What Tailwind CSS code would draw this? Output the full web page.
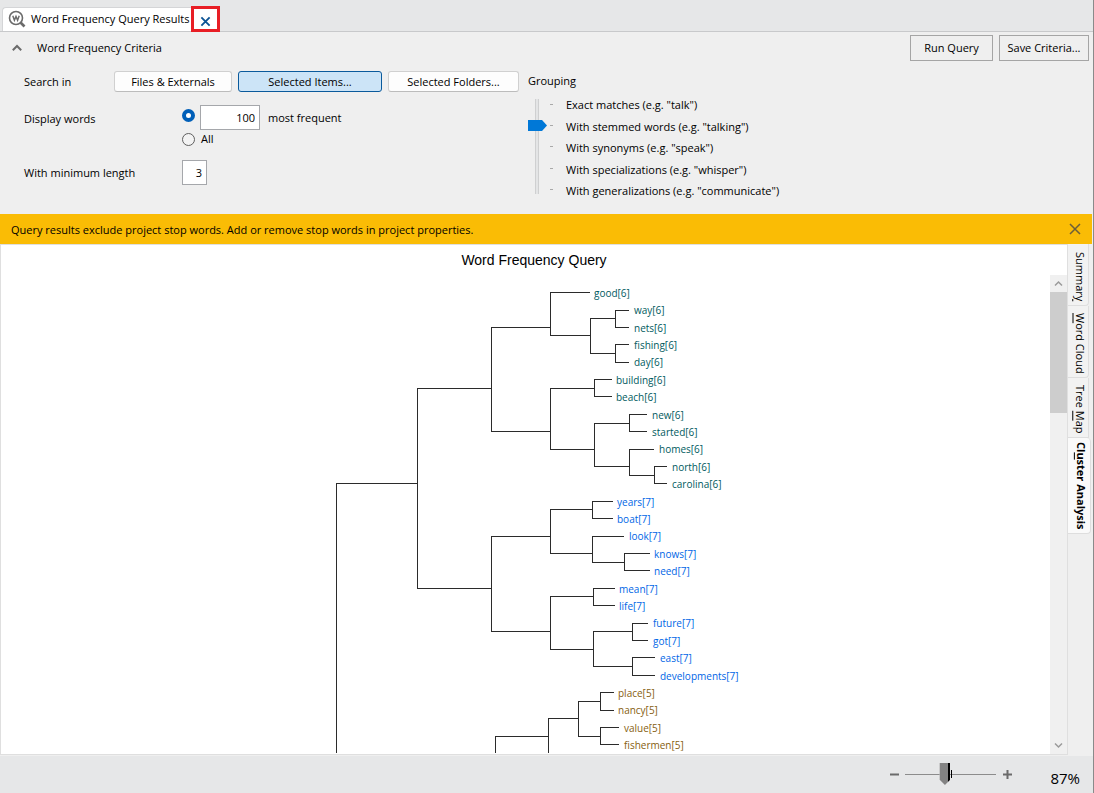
<!DOCTYPE html>
<html lang="en">
<head>
  <meta charset="UTF-8">
  <meta name="viewport" content="width=device-width, initial-scale=1.0">
  <title>Word Frequency Query Results</title>
  <script src="https://cdn.jsdelivr.net/npm/@tailwindcss/browser@4"></script>
</head>
<body class="h-screen flex flex-col overflow-hidden bg-[#efefef] border-r border-[#8a8a8a] font-['Open_Sans','Noto_Sans',sans-serif] text-[11px] leading-4 text-black">

  <!-- Document tabs -->
  <header class="h-8 shrink-0 flex items-end bg-[#e6e7e8] border-b border-[#c8c9cb] pl-[2px]">
    <div class="h-6 flex items-center gap-1 bg-white rounded-tl-sm border-t border-l border-[#d4d5d7] pl-1 pr-[2px]">
      <svg class="w-5 h-5" viewBox="0 0 20 20" fill="none" stroke="#6b6b6b">
        <circle cx="9" cy="8" r="6.5" stroke-width="1.6"/>
        <path d="M13.5 12.5L17.5 16.5" stroke-width="2.6"/>
        <path d="M5.8 5.8L7.4 10.2L9 6.4L10.6 10.2L12.2 5.8" stroke-width="1.5"/>
      </svg>
      <h1 class="pb-[2px]">Word Frequency Query Results</h1>
    </div>
    <button type="button" aria-label="Close tab" class="w-[29px] h-[26px] -mb-px flex items-center justify-center bg-white border-3 border-[#e81e25] pt-1">
      <svg class="w-[11px] h-[11px]" viewBox="0 0 12 12" stroke="#0b5394" stroke-width="2"><path d="M1.5 1.5L10.5 10.5M10.5 1.5L1.5 10.5"/></svg>
    </button>
  </header>

  <!-- Criteria -->
  <form class="h-[182px] shrink-0">
    <div class="flex items-center pt-[3px] pl-3 pr-1">
      <button type="button" class="flex items-center gap-[15px]">
        <svg class="w-[10px] h-[10px]" viewBox="0 0 10 10" fill="none" stroke="#6b6b6b" stroke-width="2"><path d="M0.8 7.2L5 3L9.2 7.2"/></svg>
        <span>Word Frequency Criteria</span>
      </button>
      <div class="ml-auto flex gap-[6px]">
        <button type="button" class="w-[83px] h-[26px] border border-[#a5a5a5]">Run Query</button>
        <button type="button" class="w-[90px] h-[26px] border border-[#a5a5a5]">Save Criteria...</button>
      </div>
    </div>

    <div class="flex pl-6 pt-[10px]">
      <div class="w-[504px]">
        <div class="flex items-center">
          <span class="w-[90px]">Search in</span>
          <div class="flex gap-[6px]">
            <button type="button" class="w-[118px] h-[21px] rounded-[3px] border border-[#d0d0d0] border-b-[#bcbcbc] bg-[#fdfdfd]">Files &amp; Externals</button>
            <button type="button" class="w-[144px] h-[21px] rounded-[3px] border border-[#0a5a9c] bg-[#cce4f7]">Selected Items...</button>
            <button type="button" class="w-[131px] h-[21px] rounded-[3px] border border-[#d0d0d0] border-b-[#bcbcbc] bg-[#fdfdfd]">Selected Folders...</button>
          </div>
        </div>
        <div class="flex pt-[13px]">
          <span class="w-[158px] pt-[6px]">Display words</span>
          <div>
            <div class="flex items-center h-[25px]">
              <input type="radio" name="words" checked aria-label="Number of words" class="appearance-none w-[13px] h-[13px] mb-1 rounded-full bg-white border border-[#5f5f5f] checked:border-4 checked:border-[#005fb8]">
              <input type="text" id="count" value="100" class="w-[60px] h-[25px] ml-[5px] px-1 bg-white border border-[#a5a7ab] text-right">
              <label for="count" class="ml-2">most frequent</label>
            </div>
            <div class="flex items-center gap-[6px] pt-px">
              <input type="radio" name="words" id="all" class="appearance-none w-[13px] h-[13px] rounded-full bg-[#f3f3f3] border border-[#5f5f5f] checked:border-4 checked:border-[#005fb8]">
              <label for="all">All</label>
            </div>
          </div>
        </div>
        <div class="flex items-center pt-[13px]">
          <label for="minlen" class="w-[158px]">With minimum length</label>
          <input type="text" id="minlen" value="3" class="w-[25px] h-[25px] px-1 bg-white border border-[#a5a7ab] text-right">
        </div>
      </div>

      <div>
        <label for="grouping" class="block h-7 pt-[2px]">Grouping</label>
        <div class="flex items-start">
          <input type="range" id="grouping" min="0" max="4" value="1" class="appearance-none [writing-mode:vertical-lr] w-[19px] h-[95px] bg-[linear-gradient(to_right,#cfd0d1_1px,#e4e5e6_1px_3px,#cfd0d1_3px)] bg-[length:4px_100%] bg-[position:7px_0] bg-no-repeat [&::-webkit-slider-thumb]:appearance-none [&::-webkit-slider-thumb]:w-[19px] [&::-webkit-slider-thumb]:h-[11px] [&::-webkit-slider-thumb]:bg-[#0078d7] [&::-webkit-slider-thumb]:[clip-path:polygon(0_0,14px_0,19px_50%,14px_100%,0_100%)]">
          <svg class="w-[3px] h-[95px] ml-[3px]" viewBox="0 0 3 95" stroke="#a9a9a9" shape-rendering="crispEdges"><path d="M0 5.5H3M0 26.5H3M0 47.5H3M0 69.5H3M0 90.5H3"/></svg>
          <ul class="ml-[13px] -mt-[2px] h-[102px] flex flex-col justify-between">
            <li>Exact matches (e.g. "talk")</li>
            <li>With stemmed words (e.g. "talking")</li>
            <li>With synonyms (e.g. "speak")</li>
            <li>With specializations (e.g. "whisper")</li>
            <li>With generalizations (e.g. "communicate")</li>
          </ul>
        </div>
      </div>
    </div>
  </form>

  <!-- Stop words notice -->
  <div class="h-[30px] shrink-0 mr-px flex items-center justify-between bg-[#fabc05] px-[11px]">
    <p class="pt-[2px]">Query results exclude project stop words. Add or remove stop words in project properties.</p>
    <button type="button" aria-label="Dismiss">
      <svg class="w-3 h-3" viewBox="0 0 12 12" stroke="#6b5f3a" stroke-width="1.5"><path d="M1 1L11 11M11 1L1 11"/></svg>
    </button>
  </div>

  <!-- Results -->
  <div class="flex-1 min-h-0 flex">
    <main class="flex-1 min-w-0 flex flex-col bg-white border border-[#dfdfdf]">
      <h2 class="h-[30px] shrink-0 pt-[5px] text-center font-['Liberation_Sans',sans-serif] text-sm">Word Frequency Query</h2>
      <div class="flex-1 min-h-0 flex">
        <div class="flex-1 min-w-0 overflow-hidden">
          <svg class="w-[437px] h-[478px] mx-auto" viewBox="307 275 437 478">
            <g fill="none" stroke="#2b2b2b" shape-rendering="crispEdges">
              <path d="M336.5 753V483.5H417.5M491 388.5H417.5V588.5H491"/>
              <path d="M551 327.5H491.5V431.5H551M590 292.5H550.5V335.5H590"/>
              <path d="M616 318.5H590.5V353.5H616M629 310.5H615.5V327.5H629M629 344.5H615.5V362.5H629"/>
              <path d="M594 388.5H550.5V449.5H594M612 379.5H594.5V396.5H612"/>
              <path d="M629 423.5H594.5V466.5H629M647 414.5H629.5V431.5H647M654 449.5H629.5V475.5H654M667 466.5H654.5V483.5H667"/>
              <path d="M551 536.5H491.5V631.5H551M592 509.5H550.5V553.5H592M613 501.5H592.5V518.5H613"/>
              <path d="M624 536.5H592.5V562.5H624M650 553.5H624.5V570.5H650"/>
              <path d="M593 596.5H550.5V649.5H593M615 588.5H593.5V605.5H615"/>
              <path d="M632 631.5H593.5V666.5H632M648 623.5H632.5V640.5H648M655 657.5H632.5V675.5H655"/>
              <path d="M495.5 753V736.5H548M548.5 753V718.5H578M600 701.5H578.5V736.5H600"/>
              <path d="M614 692.5H600.5V710.5H614M619 727.5H600.5V744.5H619"/>
            </g>
            <g class="text-[10px]" fill="#005a60">
              <text x="594" y="297">good[6]</text>
              <text x="634" y="314">way[6]</text>
              <text x="634" y="332">nets[6]</text>
              <text x="634" y="349">fishing[6]</text>
              <text x="634" y="366">day[6]</text>
              <text x="616" y="384">building[6]</text>
              <text x="616" y="401">beach[6]</text>
              <text x="652" y="419">new[6]</text>
              <text x="652" y="436">started[6]</text>
              <text x="659" y="453">homes[6]</text>
              <text x="672" y="471">north[6]</text>
              <text x="672" y="488">carolina[6]</text>
            </g>
            <g class="text-[10px]" fill="#0066e6">
              <text x="617" y="506">years[7]</text>
              <text x="617" y="523">boat[7]</text>
              <text x="629" y="540">look[7]</text>
              <text x="654" y="558">knows[7]</text>
              <text x="654" y="575">need[7]</text>
              <text x="619" y="593">mean[7]</text>
              <text x="619" y="610">life[7]</text>
              <text x="653" y="627">future[7]</text>
              <text x="653" y="645">got[7]</text>
              <text x="660" y="662">east[7]</text>
              <text x="660" y="680">developments[7]</text>
            </g>
            <g class="text-[10px]" fill="#866010">
              <text x="618" y="697">place[5]</text>
              <text x="618" y="714">nancy[5]</text>
              <text x="624" y="732">value[5]</text>
              <text x="624" y="749">fishermen[5]</text>
            </g>
          </svg>
        </div>
        <!-- Scrollbar -->
        <div class="w-[17px] flex flex-col items-center bg-[#f0f0f0]">
          <svg class="w-[17px] h-[17px]" viewBox="0 0 17 17" fill="none" stroke="#9a9a9a" stroke-width="1.5"><path d="M5 10.5L8.5 7L12 10.5"/></svg>
          <div class="w-full h-[121px] bg-[#cdcdcd]"></div>
          <svg class="w-[17px] h-[17px] mt-auto" viewBox="0 0 17 17" fill="none" stroke="#9a9a9a" stroke-width="1.5"><path d="M5 6.5L8.5 10L12 6.5"/></svg>
        </div>
      </div>
    </main>

    <!-- View tabs -->
    <nav class="w-[25px] flex flex-col items-start">
      <button type="button" class="w-[21px] h-[62px] pl-[3px] pt-1 flex items-center justify-center [writing-mode:vertical-rl] bg-[#f2f2f2] border-r border-b border-[#dedede] rounded-br-sm"><span>Summar<u>y</u></span></button>
      <button type="button" class="w-[21px] h-[72px] pl-[3px] pt-1 flex items-center justify-center [writing-mode:vertical-rl] bg-[#f2f2f2] border-r border-b border-[#dedede] rounded-br-sm"><span><u>W</u>ord Cloud</span></button>
      <button type="button" class="w-[21px] h-[60px] pl-[3px] pt-1 flex items-center justify-center [writing-mode:vertical-rl] bg-[#f2f2f2] border-r border-b border-[#dedede]"><span>Tree <u>M</u>ap</span></button>
      <button type="button" class="w-[23px] h-[96px] pl-[3px] flex items-center justify-center [writing-mode:vertical-rl] bg-[#fafafa] border-r border-b border-[#dedede] rounded-r-sm font-bold"><span>Cl<u>u</u>ster Analysis</span></button>
    </nav>
  </div>

  <!-- Zoom bar -->
  <footer class="h-[37px] shrink-0 mt-px flex items-start bg-[#e6e7e8] pr-[13px]">
    <div class="ml-auto flex items-center h-[36px]">
      <button type="button" aria-label="Zoom out"><svg class="w-[9px] h-[9px]" viewBox="0 0 9 9" stroke="#6b6b6b" stroke-width="2"><path d="M0 4.5H9"/></svg></button>
      <div class="relative flex ml-[6px] mr-[7px]">
        <input type="range" aria-label="Zoom" min="0" max="80" value="34" class="appearance-none w-[91px] h-[22px] bg-[linear-gradient(#8c8c8c,#8c8c8c)] bg-[length:100%_1px] bg-center bg-no-repeat [&::-webkit-slider-thumb]:appearance-none [&::-webkit-slider-thumb]:w-[11px] [&::-webkit-slider-thumb]:h-[22px] [&::-webkit-slider-thumb]:bg-[linear-gradient(to_right,#b4b4b4_1px,#838383_1px_9px,#000_9px)] [&::-webkit-slider-thumb]:[clip-path:polygon(0_0,100%_0,100%_75%,50%_100%,0_75%)]">
        <span class="absolute left-[46px] top-[7px] w-px h-2 bg-black"></span>
      </div>
      <button type="button" aria-label="Zoom in"><svg class="w-[9px] h-[9px]" viewBox="0 0 9 9" stroke="#6b6b6b" stroke-width="2"><path d="M0 4.5H9M4.5 0V9"/></svg></button>
    </div>
    <span class="ml-[38px] pt-3 text-[15px] leading-5">87%</span>
  </footer>
</body>
</html>
